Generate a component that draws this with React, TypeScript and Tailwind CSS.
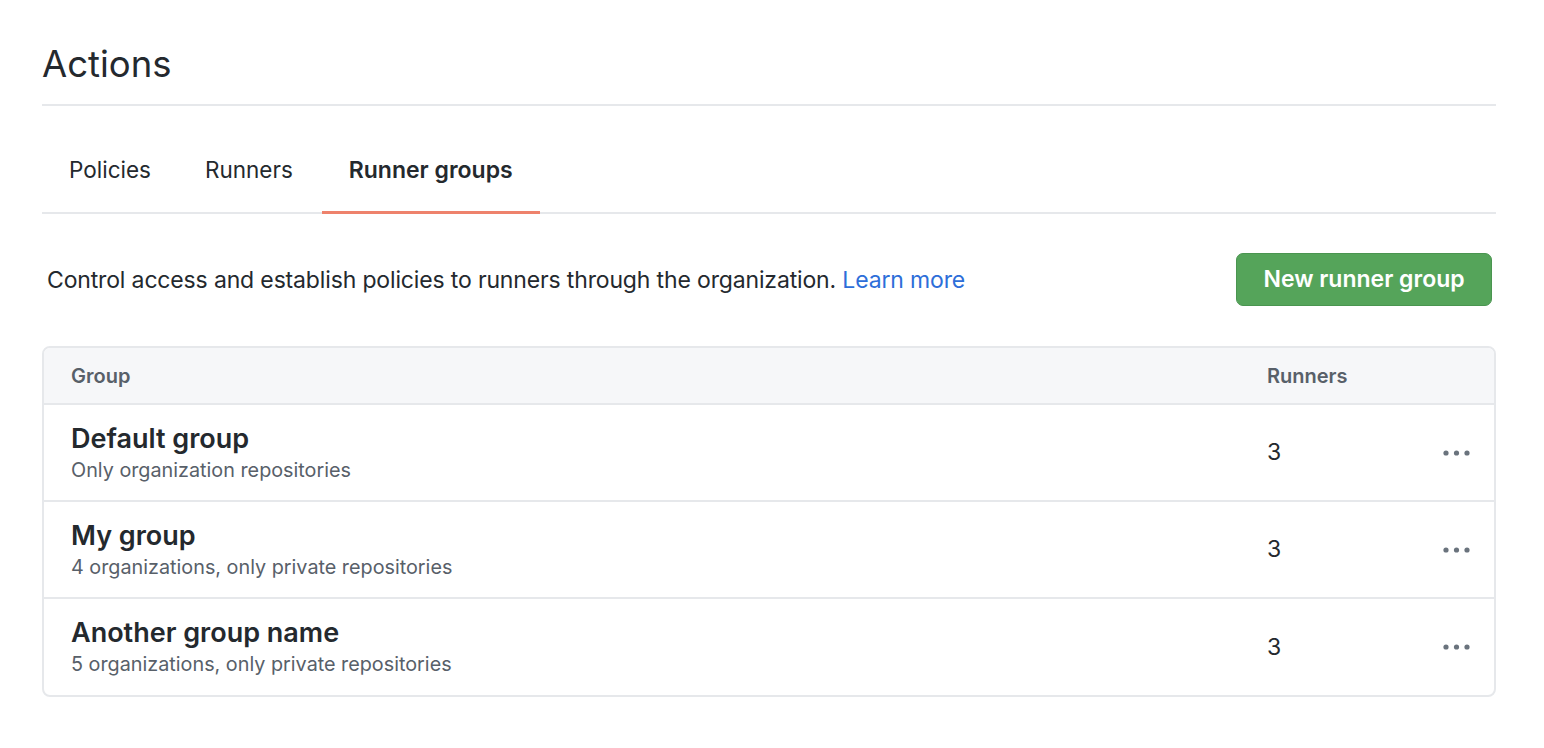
import React from "react";

interface Group {
  name: string;
  detail: string;
  runners: number;
}

const groups: Group[] = [
  { name: "Default group", detail: "Only organization repositories", runners: 3 },
  { name: "My group", detail: "4 organizations, only private repositories", runners: 3 },
  { name: "Another group name", detail: "5 organizations, only private repositories", runners: 3 },
];

const tabs = ["Policies", "Runners", "Runner groups"];

function KebabDots() {
  return (
    <svg width="27" height="8" viewBox="0 0 27 8" fill="#6a737d" aria-hidden="true">
      <circle cx="3" cy="4" r="2.6" />
      <circle cx="13.5" cy="4" r="2.6" />
      <circle cx="24" cy="4" r="2.6" />
    </svg>
  );
}

export default function App() {
  return (
    <div className="min-h-screen bg-white text-[#24292e] font-['Inter','Noto_Sans',sans-serif]">
      <div className="ml-[42px] w-[1454px]">
        {/* Page title */}
        <h1 className="pt-[40px] pb-[16px] text-[36.5px] leading-[48px] font-normal border-b-2 border-[#e6e8eb]">
          Actions
        </h1>

        {/* Tabs */}
        <nav className="mt-[49px] flex border-b-2 border-[#e6e8eb]">
          {tabs.map((tab, i) => {
            const active = i === tabs.length - 1;
            return (
              <div
                key={tab}
                className={
                  active
                    ? "ml-[2px] px-[27px] pb-[24px] text-[23px] leading-[30px] font-semibold border-b-[3px] border-[#ee826c] -mb-[2px]"
                    : "px-[27px] pb-[27px] text-[22.5px] leading-[30px]"
                }
              >
                {tab}
              </div>
            );
          })}
        </nav>

        {/* Intro + button */}
        <div className="mt-[39px] flex items-center justify-between">
          <p className="pl-[5px] text-[23px] leading-[30px] tracking-[-0.15px]">
            Control access and establish policies to runners through the organization.{" "}
            <a href="#" className="text-[#2d6ed9]">
              Learn more
            </a>
          </p>
          <button className="mr-[4px] h-[53px] w-[256px] rounded-[7px] bg-[#55a45a] border border-[#4a9550] text-white text-[23px] font-semibold">
            New runner group
          </button>
        </div>

        {/* Table */}
        <div className="mt-[40px] rounded-[8px] border-2 border-[#e6e8eb] overflow-hidden">
          <div className="flex items-center h-[57px] bg-[#f6f7f9] border-b-2 border-[#e6e8eb] text-[20px] font-semibold text-[#586069]">
            <div className="pl-[27px] flex-1">Group</div>
            <div className="w-[227px]">Runners</div>
          </div>
          {groups.map((g, i) => (
            <div
              key={g.name}
              className={
                i < groups.length - 1
                  ? "flex items-center h-[97px] border-b-2 border-[#e6e8eb]"
                  : "flex items-center h-[96px]"
              }
            >
              <div className="pl-[27px] flex-1">
                <div className="text-[27px] leading-[34px] font-semibold">{g.name}</div>
                <div className="text-[19.8px] leading-[28px] text-[#586069]">{g.detail}</div>
              </div>
              <div className="w-[176px] text-[23px]">{g.runners}</div>
              <div className="w-[51px] flex">
                <KebabDots />
              </div>
            </div>
          ))}
        </div>
      </div>
    </div>
  );
}
